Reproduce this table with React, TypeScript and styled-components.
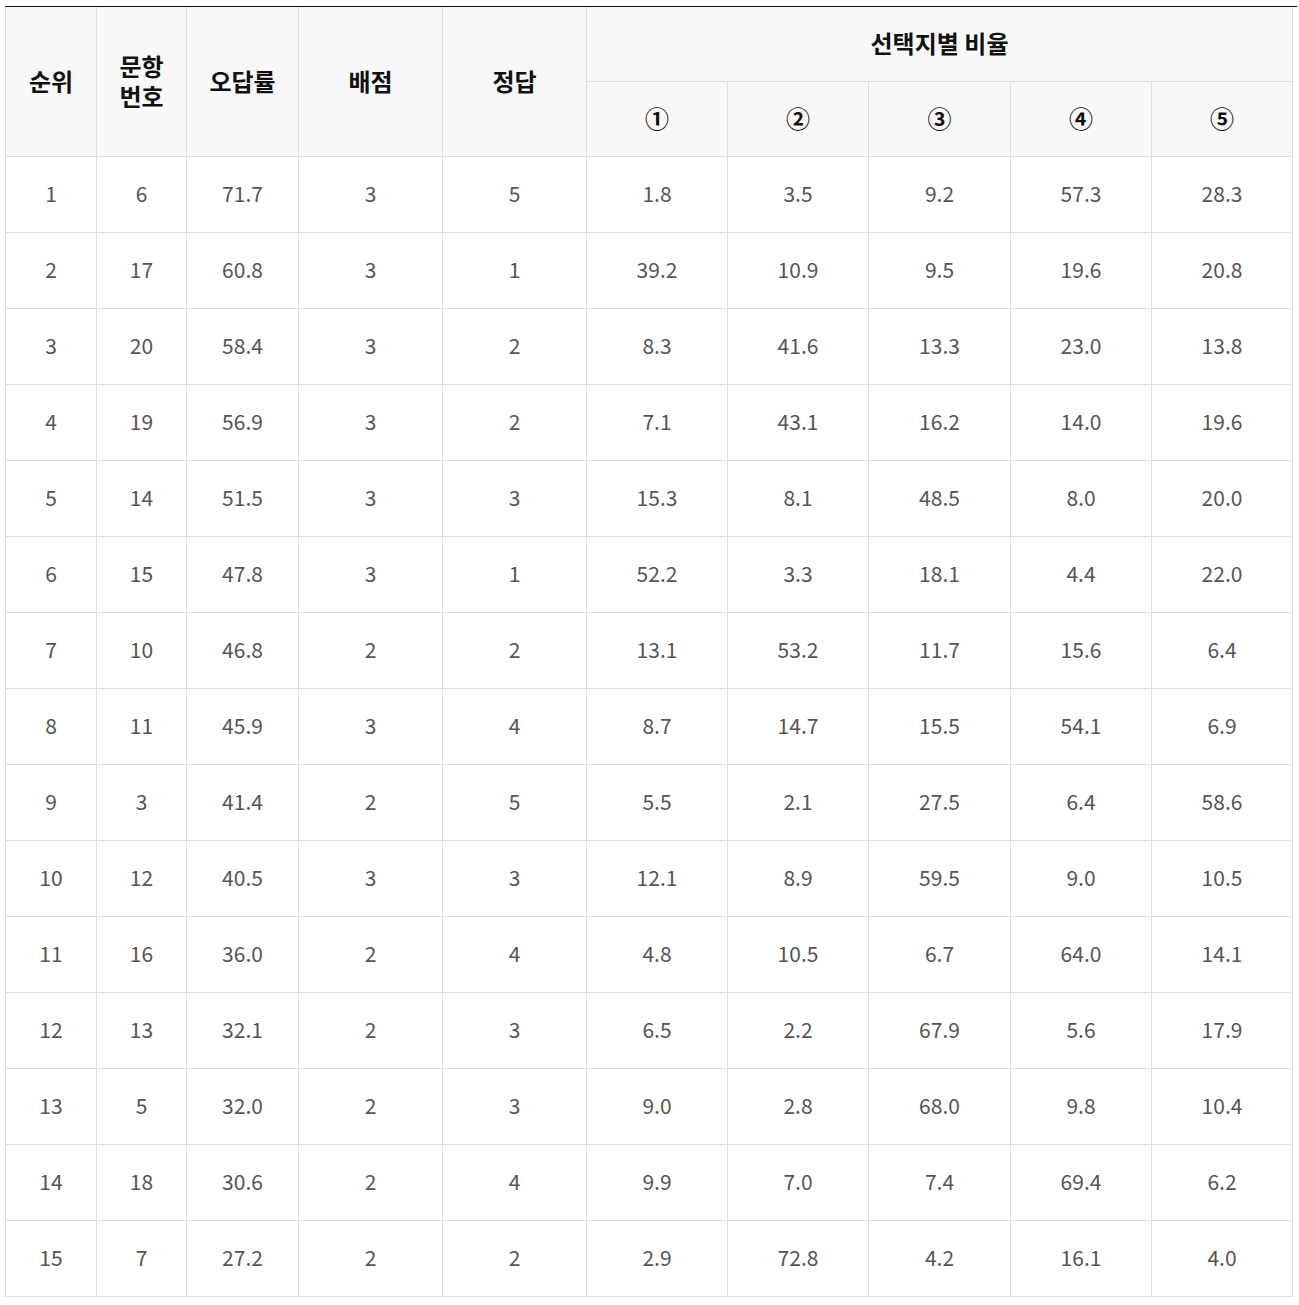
import styled, { createGlobalStyle } from "styled-components";

const Global = createGlobalStyle`
    body {
        margin: 0;
        background: #ffffff;
        font-family: "Noto Sans CJK KR", "Noto Sans", sans-serif;
    }
`;

const Wrap = styled.div`
    margin: 6px 2px 0 5px;
    border-top: 1px solid #111;
`;

const Table = styled.table`
    width: 1287px;
    border-collapse: collapse;
    table-layout: fixed;
`;

const Th = styled.th`
    background: #f8f8f8;
    border: 1px solid #dedede;
    border-top: none;
    color: #111;
    font-size: 24px;
    font-weight: 700;
    line-height: 30px;
    padding: 0 18px 2px;
    text-align: center;
    height: 72px;
`;

const Td = styled.td`
    border: 1px solid #dedede;
    color: #555;
    font-size: 21px;
    line-height: 24px;
    height: 71px;
    padding: 0 0 4px;
    text-align: center;
`;

const widths = [91, 90, 112, 144, 144, 141, 141, 142, 141, 141];

const rows = [
    [1, 6, "71.7", 3, 5, "1.8", "3.5", "9.2", "57.3", "28.3"],
    [2, 17, "60.8", 3, 1, "39.2", "10.9", "9.5", "19.6", "20.8"],
    [3, 20, "58.4", 3, 2, "8.3", "41.6", "13.3", "23.0", "13.8"],
    [4, 19, "56.9", 3, 2, "7.1", "43.1", "16.2", "14.0", "19.6"],
    [5, 14, "51.5", 3, 3, "15.3", "8.1", "48.5", "8.0", "20.0"],
    [6, 15, "47.8", 3, 1, "52.2", "3.3", "18.1", "4.4", "22.0"],
    [7, 10, "46.8", 2, 2, "13.1", "53.2", "11.7", "15.6", "6.4"],
    [8, 11, "45.9", 3, 4, "8.7", "14.7", "15.5", "54.1", "6.9"],
    [9, 3, "41.4", 2, 5, "5.5", "2.1", "27.5", "6.4", "58.6"],
    [10, 12, "40.5", 3, 3, "12.1", "8.9", "59.5", "9.0", "10.5"],
    [11, 16, "36.0", 2, 4, "4.8", "10.5", "6.7", "64.0", "14.1"],
    [12, 13, "32.1", 2, 3, "6.5", "2.2", "67.9", "5.6", "17.9"],
    [13, 5, "32.0", 2, 3, "9.0", "2.8", "68.0", "9.8", "10.4"],
    [14, 18, "30.6", 2, 4, "9.9", "7.0", "7.4", "69.4", "6.2"],
    [15, 7, "27.2", 2, 2, "2.9", "72.8", "4.2", "16.1", "4.0"],
];

export default function App() {
    return (
        <>
            <Global />
            <Wrap>
                <Table>
                    <colgroup>
                        {widths.map((w, i) => (
                            <col key={i} style={{ width: w }} />
                        ))}
                    </colgroup>
                    <thead>
                        <tr>
                            <Th rowSpan={2}>순위</Th>
                            <Th rowSpan={2}>문항 번호</Th>
                            <Th rowSpan={2}>오답률</Th>
                            <Th rowSpan={2}>배점</Th>
                            <Th rowSpan={2}>정답</Th>
                            <Th colSpan={5}>선택지별 비율</Th>
                        </tr>
                        <tr>
                            {["①", "②", "③", "④", "⑤"].map((c) => (
                                <Th key={c}>{c}</Th>
                            ))}
                        </tr>
                    </thead>
                    <tbody>
                        {rows.map((r) => (
                            <tr key={r[0]}>
                                {r.map((v, i) => (
                                    <Td key={i}>{v}</Td>
                                ))}
                            </tr>
                        ))}
                    </tbody>
                </Table>
            </Wrap>
        </>
    );
}
